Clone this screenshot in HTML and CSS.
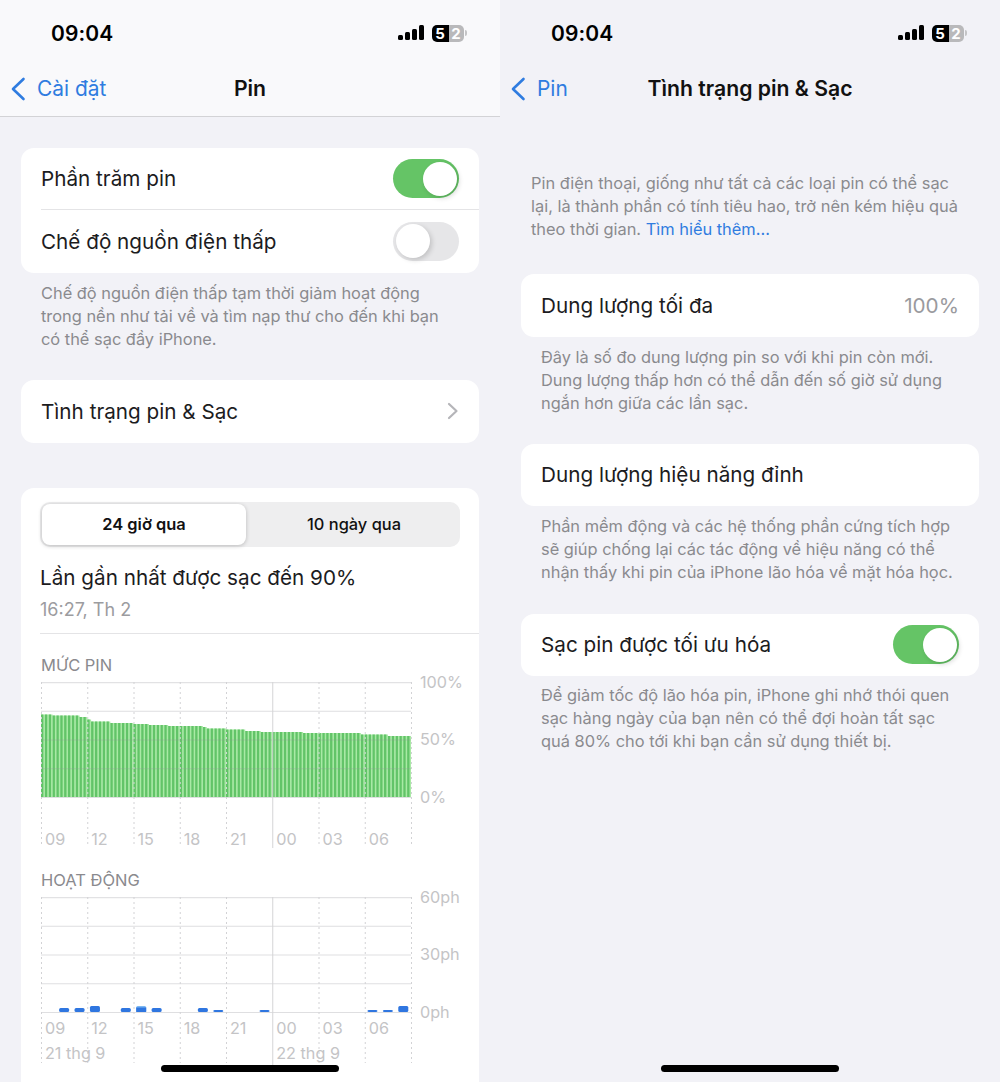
FILE: index.html
```html
<!DOCTYPE html>
<html lang="vi">
<head>
  <meta charset="UTF-8">
  <meta name="viewport" content="width=device-width, initial-scale=1.0">
  <title>Pin</title>
  <link rel="stylesheet" href="styles.css">
</head>
<body>
  <div class="screens">

    <section class="screen">
      <div class="top-bar top-bar-solid">
        <div class="status-bar">
          <span class="clock">09:04</span>
          <div class="status-icons">
            <svg class="signal" width="27" height="16" viewBox="0 0 27 16"><rect x="0" y="10" width="5" height="5" rx="1.5"/><rect x="7" y="7" width="5" height="8" rx="1.5"/><rect x="14" y="4" width="5" height="11" rx="1.5"/><rect x="21" y="0" width="5" height="15" rx="1.5"/></svg>
            <div class="battery"><span>5</span><span>2</span></div>
            <div class="battery-nub"></div>
          </div>
        </div>
        <div class="nav-bar">
          <a class="back">
            <svg width="16" height="24" viewBox="0 0 16 24"><path d="M13.5 2 L3 12 L13.5 22" fill="none" stroke="#2f7ce0" stroke-width="2.6" stroke-linecap="round" stroke-linejoin="round"/></svg>
            Cài đặt
          </a>
          <h1 class="nav-title">Pin</h1>
        </div>
      </div>

      <div class="content content-left">
        <div class="card">
          <div class="row row-first">
            <span>Phần trăm pin</span>
            <div class="toggle on"><div class="knob"></div></div>
          </div>
          <div class="row row-split">
            <span>Chế độ nguồn điện thấp</span>
            <div class="toggle"><div class="knob"></div></div>
          </div>
        </div>
        <p class="note">Chế độ nguồn điện thấp tạm thời giảm hoạt động<br>trong nền như tải về và tìm nạp thư cho đến khi bạn<br>có thể sạc đầy iPhone.</p>

        <div class="card card-link">
          <div class="row">
            <span>Tình trạng pin &amp; Sạc</span>
            <svg width="12" height="18" viewBox="0 0 12 18"><path d="M2 2 L9.5 9 L2 16" fill="none" stroke="#b5b5b9" stroke-width="2.2" stroke-linecap="round" stroke-linejoin="round"/></svg>
          </div>
        </div>

        <div class="card card-usage">
          <div class="segments">
            <div class="segment selected">24 giờ qua</div>
            <div class="segment">10 ngày qua</div>
          </div>
          <div class="last-charge">Lần gần nhất được sạc đến 90%</div>
          <div class="last-time">16:27, Th 2</div>
          <div class="usage-line"></div>

          <h2 class="chart-title">MỨC PIN</h2>
          <div class="chart chart-level" id="level-chart">
            <div class="x-axis">
              <span>09</span><span>12</span><span>15</span><span>18</span><span>21</span><span>00</span><span>03</span><span>06</span>
            </div>
            <div class="y-axis">
              <span>100%</span><span>50%</span><span>0%</span>
            </div>
          </div>

          <h2 class="chart-title chart-title-activity">HOẠT ĐỘNG</h2>
          <div class="chart chart-activity" id="activity-chart">
            <div class="x-axis">
              <span>09</span><span>12</span><span>15</span><span>18</span><span>21</span><span>00</span><span>03</span><span>06</span>
              <span class="date-start">21 thg 9</span><span class="date-next">22 thg 9</span>
            </div>
            <div class="y-axis">
              <span>60ph</span><span>30ph</span><span>0ph</span>
            </div>
          </div>
        </div>
      </div>
      <div class="home-bar"></div>
    </section>

    <section class="screen">
      <div class="top-bar">
        <div class="status-bar">
          <span class="clock">09:04</span>
          <div class="status-icons">
            <svg class="signal" width="27" height="16" viewBox="0 0 27 16"><rect x="0" y="10" width="5" height="5" rx="1.5"/><rect x="7" y="7" width="5" height="8" rx="1.5"/><rect x="14" y="4" width="5" height="11" rx="1.5"/><rect x="21" y="0" width="5" height="15" rx="1.5"/></svg>
            <div class="battery"><span>5</span><span>2</span></div>
            <div class="battery-nub"></div>
          </div>
        </div>
        <div class="nav-bar">
          <a class="back">
            <svg width="16" height="24" viewBox="0 0 16 24"><path d="M13.5 2 L3 12 L13.5 22" fill="none" stroke="#2f7ce0" stroke-width="2.6" stroke-linecap="round" stroke-linejoin="round"/></svg>
            Pin
          </a>
          <h1 class="nav-title">Tình trạng pin &amp; Sạc</h1>
        </div>
      </div>

      <div class="content content-right">
        <p class="note note-intro">Pin điện thoại, giống như tất cả các loại pin có thể sạc<br>lại, là thành phần có tính tiêu hao, trở nên kém hiệu quả<br>theo thời gian. <a class="link">Tìm hiểu thêm...</a></p>

        <div class="card">
          <div class="row">
            <span>Dung lượng tối đa</span>
            <span class="value">100%</span>
          </div>
        </div>
        <p class="note">Đây là số đo dung lượng pin so với khi pin còn mới.<br>Dung lượng thấp hơn có thể dẫn đến số giờ sử dụng<br>ngắn hơn giữa các lần sạc.</p>

        <div class="card card-next">
          <div class="row">
            <span>Dung lượng hiệu năng đỉnh</span>
          </div>
        </div>
        <p class="note">Phần mềm động và các hệ thống phần cứng tích hợp<br>sẽ giúp chống lại các tác động về hiệu năng có thể<br>nhận thấy khi pin của iPhone lão hóa về mặt hóa học.</p>

        <div class="card card-last">
          <div class="row">
            <span>Sạc pin được tối ưu hóa</span>
            <div class="toggle on"><div class="knob"></div></div>
          </div>
        </div>
        <p class="note note-last">Để giảm tốc độ lão hóa pin, iPhone ghi nhớ thói quen<br>sạc hàng ngày của bạn nên có thể đợi hoàn tất sạc<br>quá 80% cho tới khi bạn cần sử dụng thiết bị.</p>
      </div>
      <div class="home-bar"></div>
    </section>

  </div>
  <script src="chart.js"></script>
</body>
</html>
```

FILE: styles.css
```css
* {
  box-sizing: border-box;
}

body {
  margin: 0;
  height: 1082px;
  overflow: hidden;
  background: #f2f2f7;
  font-family: 'Inter', 'Liberation Sans', sans-serif;
  color: #1c1c1e;
}

.screens {
  display: flex;
  width: 1000px;
  height: 1082px;
}

.screen {
  position: relative;
  width: 500px;
  height: 1082px;
  overflow: hidden;
  background: #f2f2f7;
}

/* Top of the phone */
.top-bar {
  height: 117px;
}

.top-bar-solid {
  background: #f9f9fb;
  border-bottom: 1px solid #d3d3d6;
}

.status-bar {
  display: flex;
  justify-content: space-between;
  align-items: center;
  height: 66px;
  padding: 0 33px 0 51px;
}

.clock {
  font-size: 21px;
  font-weight: 600;
  color: #000;
  letter-spacing: 0.1px;
}

.status-icons {
  display: flex;
  align-items: center;
}

.signal {
  margin-right: 7px;
  fill: #000;
}

.battery {
  display: flex;
  width: 32px;
  height: 17px;
  border-radius: 5px;
  overflow: hidden;
  font-size: 15px;
  font-weight: 700;
  line-height: 17px;
  color: #fff;
  text-align: center;
  background: linear-gradient(90deg, #000 53%, #b9b9bb 53%);
}

.battery span {
  width: 50%;
}

.battery-nub {
  width: 2px;
  height: 6px;
  margin-left: 1px;
  border-radius: 0 2px 2px 0;
  background: #c4c4c6;
}

.nav-bar {
  position: relative;
  display: flex;
  justify-content: center;
  align-items: center;
  height: 44px;
}

.nav-title {
  margin: 0;
  font-size: 21.2px;
  font-weight: 600;
  color: #111;
}

.back {
  position: absolute;
  left: 10px;
  top: 10px;
  display: flex;
  align-items: center;
  gap: 11px;
  font-size: 20.9px;
  color: #2f7ce0;
}

/* Grouped list */
.content {
  padding: 0 21px;
}

.content-left {
  padding-top: 31px;
}

.content-right {
  padding-top: 55px;
}

.card {
  background: #fff;
  border-radius: 13px;
}

.card-link {
  margin-top: 29px;
}

.card-next {
  margin-top: 29px;
}

.card-last {
  margin-top: 29.5px;
}

.row {
  display: flex;
  justify-content: space-between;
  align-items: center;
  height: 62.5px;
  padding: 0 20px;
  font-size: 20.7px;
  color: #1c1c1e;
}

.row-first {
  height: 61px;
}

.row-split {
  position: relative;
  height: 64px;
}

.row-split::before {
  content: "";
  position: absolute;
  top: 0;
  left: 20px;
  right: 0;
  height: 1px;
  background: #e4e4e6;
}

.value {
  color: #9a9a9e;
}

.toggle {
  display: flex;
  width: 66px;
  height: 39px;
  padding: 2.5px;
  border-radius: 20px;
  background: #e6e6e8;
}

.toggle.on {
  justify-content: flex-end;
  background: #65c466;
}

.knob {
  width: 34px;
  height: 34px;
  border-radius: 50%;
  background: #fff;
  box-shadow: 2px 2px 5px rgba(0, 0, 0, 0.16);
}

.note {
  margin: 9px 0 0;
  padding: 0 20px;
  font-size: 16.4px;
  line-height: 23px;
  color: #8a8a8e;
}

.note-last {
  margin-top: 7.5px;
}

.note-intro {
  margin: 0 0 33px;
  padding: 0 10px;
}

.link {
  color: #2f7ce0;
}

/* Usage card */
.card-usage {
  height: 640px;
  margin-top: 45px;
  padding: 14px 0 0 19px;
}

.segments {
  display: flex;
  width: 420px;
  height: 45px;
  padding: 2px;
  border-radius: 10px;
  background: #eeeeef;
}

.segment {
  flex: 1;
  display: flex;
  justify-content: center;
  align-items: center;
  padding-left: 4px;
  font-size: 16.4px;
  font-weight: 500;
  color: #111;
}

.segment.selected {
  flex: 0 0 204px;
  padding-left: 0;
  border-radius: 8px;
  background: #fff;
  font-weight: 600;
  box-shadow: 0 1px 4px rgba(0, 0, 0, 0.22);
}

.last-charge {
  margin-top: 17px;
  font-size: 20.7px;
  line-height: 28px;
  color: #1c1c1e;
}

.last-time {
  margin-top: 6px;
  font-size: 18px;
  line-height: 24px;
  color: #9c9ca0;
}

.usage-line {
  height: 1px;
  margin-top: 11px;
  background: #e4e4e6;
}

.chart-title {
  margin: 21px 0 0 1px;
  font-size: 16.5px;
  font-weight: 400;
  line-height: 20px;
  color: #8a8a8e;
}

.chart-title-activity {
  margin-top: 22px;
}

.chart {
  position: relative;
  display: flex;
  margin: 7px 0 0 1px;
}

.chart-level {
  height: 166px;
}

.chart-activity {
  height: 168px;
}

.chart-grid {
  position: absolute;
  top: 0;
  left: 0;
}

.x-axis {
  position: relative;
  display: grid;
  grid-template-columns: repeat(8, 46.25px);
  grid-auto-rows: 25px;
  align-content: start;
  width: 370px;
  font-size: 16.2px;
  color: #c4c4c6;
}

.x-axis span {
  padding-left: 4px;
  line-height: 20px;
  white-space: nowrap;
}

.chart-level .x-axis {
  padding-top: 147px;
}

.chart-activity .x-axis {
  padding-top: 121px;
}

.date-start {
  grid-column: 1 / 5;
}

.date-next {
  grid-column: 6 / 9;
}

.y-axis {
  position: relative;
  display: flex;
  flex-direction: column;
  justify-content: space-between;
  height: 135px;
  margin: -10px 0 0 9px;
  font-size: 16.2px;
  line-height: 20px;
  color: #c4c4c6;
}

.home-bar {
  position: absolute;
  left: 161px;
  bottom: 10px;
  width: 178px;
  height: 7px;
  border-radius: 4px;
  background: #000;
}
```

FILE: chart.js
```js
const SVG_NS = "http://www.w3.org/2000/svg";
const PLOT_WIDTH = 370;
const PLOT_HEIGHT = 115;
const STEP = PLOT_WIDTH / 8;

// [x up to, top of the bar] along the battery level plot
const LEVEL_STEPS = [
  [9, 32.5], [37, 33.5], [43, 35], [47, 37.5], [69, 39.5], [89, 41], [106, 42],
  [124, 43], [159, 44], [164, 45], [184, 46.5], [204, 47.5], [217, 49], [259, 50],
  [319, 51], [344, 52.5], [370, 54]
];

// [hour slot, height, has a light top]
const ACTIVITY = [
  [1, 4], [2, 4], [3, 6], [5, 4], [6, 6, true], [7, 4], [10, 4], [11, 2],
  [14, 2], [21, 2], [22, 2], [23, 6]
];

function el(name, attrs, parent) {
  const node = document.createElementNS(SVG_NS, name);
  Object.keys(attrs).forEach(key => node.setAttribute(key, attrs[key]));
  parent.appendChild(node);
  return node;
}

function makeGrid(container, height) {
  const svg = el("svg", { class: "chart-grid", width: PLOT_WIDTH + 2, height: height }, container);
  svg.remove();
  container.insertBefore(svg, container.firstChild);
  return svg;
}

function drawLines(svg, height) {
  for (let i = 0; i < 5; i++) {
    const y = i * PLOT_HEIGHT / 4 + 0.5;
    const color = i === 0 ? "#e2e2e4" : "rgba(150, 150, 155, 0.3)";
    el("line", { x1: 0, x2: PLOT_WIDTH, y1: y, y2: y, stroke: color, "stroke-width": i === 0 ? 1.5 : 1 }, svg);
  }
  for (let i = 0; i <= 8; i++) {
    const x = i * STEP + 0.5;
    if (i === 5) {
      el("line", { x1: x, x2: x, y1: 0, y2: height, stroke: "#d4d4d6" }, svg);
    } else {
      el("line", { x1: x, x2: x, y1: 0, y2: height - 2, stroke: "#d2d2d5", "stroke-dasharray": "2 3" }, svg);
    }
  }
}

function levelTop(x) {
  const step = LEVEL_STEPS.find(s => x < s[0]);
  return step ? step[1] : 54;
}

function drawLevel() {
  const svg = makeGrid(document.getElementById("level-chart"), 166);
  const pitch = PLOT_WIDTH / 96;
  for (let i = 0; i < 96; i++) {
    const x = i * pitch;
    const top = levelTop(x);
    el("rect", { x: x, y: top, width: pitch, height: PLOT_HEIGHT - top, fill: "#a9eaa5" }, svg);
    el("rect", { x: x, y: top, width: pitch - 1.5, height: PLOT_HEIGHT - top, fill: "#62c468" }, svg);
  }
  drawLines(svg, 166);
}

function drawActivity() {
  const svg = makeGrid(document.getElementById("activity-chart"), 168);
  const pitch = PLOT_WIDTH / 24;
  drawLines(svg, 168);
  ACTIVITY.forEach(([slot, h, light]) => {
    const x = slot * pitch + 2.7;
    el("rect", { x: x, y: PLOT_HEIGHT - h, width: 10, height: h, rx: 1.5, fill: light ? "#7db8f2" : "#2f76e0" }, svg);
    if (light) {
      el("rect", { x: x, y: PLOT_HEIGHT - 4.5, width: 10, height: 4.5, fill: "#2f76e0" }, svg);
    }
  });
}

drawLevel();
drawActivity();
```
